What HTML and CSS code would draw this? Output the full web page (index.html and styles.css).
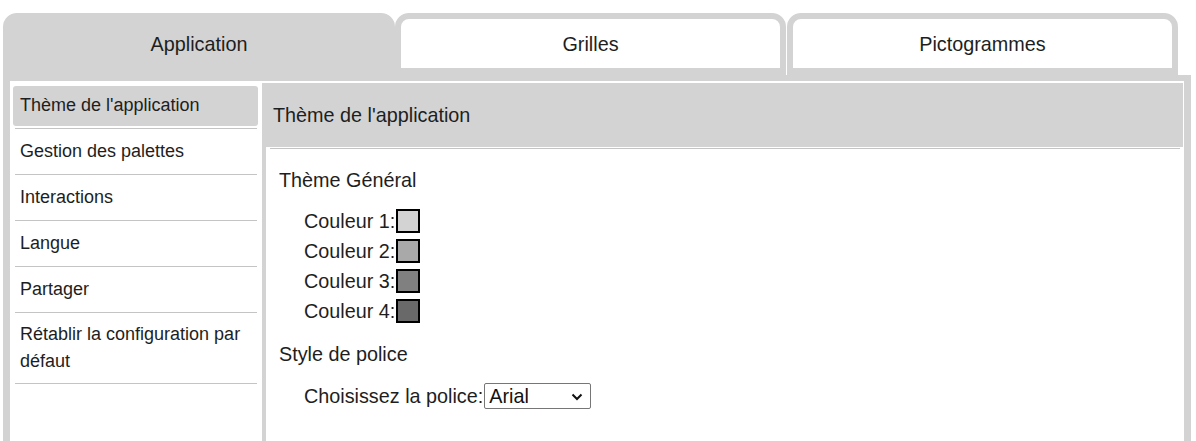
FILE: index.html
```html
<!DOCTYPE html>
<html lang="fr">
<head>
<meta charset="utf-8">
<title>Paramètres</title>
<link rel="stylesheet" href="styles.css">
</head>
<body>
<div class="page">
  <div class="tabs">
    <div class="tab tab-active">Application</div>
    <div class="tab">Grilles</div>
    <div class="tab tab-last">Pictogrammes</div>
  </div>
  <div class="panel">
    <div class="panel-inner">
      <ul class="sidebar">
        <li class="nav-item is-active"><span class="nav-label">Thème de l'application</span></li>
        <li class="nav-item"><span class="nav-label">Gestion des palettes</span></li>
        <li class="nav-item"><span class="nav-label">Interactions</span></li>
        <li class="nav-item"><span class="nav-label">Langue</span></li>
        <li class="nav-item"><span class="nav-label">Partager</span></li>
        <li class="nav-item"><span class="nav-label">Rétablir la configuration par défaut</span></li>
      </ul>
      <div class="content">
        <div class="content-header">Thème de l'application</div>
        <div class="content-body">
          <div class="rule"></div>
          <div class="section">
            <div class="section-title title-first">Thème Général</div>
            <div class="color-list">
              <div class="color-row">Couleur 1:<span class="swatch" style="background:#d3d3d3"></span></div>
              <div class="color-row">Couleur 2:<span class="swatch" style="background:#a9a9a9"></span></div>
              <div class="color-row">Couleur 3:<span class="swatch" style="background:#808080"></span></div>
              <div class="color-row">Couleur 4:<span class="swatch" style="background:#696969"></span></div>
            </div>
            <div class="section-title title-second">Style de police</div>
            <div class="font-row">
              <span>Choisissez la police:</span>
              <span class="select-wrap">
                <select class="font-select">
                  <option>Arial</option>
                  <option>Verdana</option>
                  <option>Times New Roman</option>
                </select>
                <svg class="chevron" width="12" height="8" viewBox="0 0 12 8" aria-hidden="true"><path d="M1.5 1.5 L6 6 L10.5 1.5" fill="none" stroke="#111" stroke-width="2"/></svg>
              </span>
            </div>
          </div>
        </div>
      </div>
    </div>
  </div>
</div>
</body>
</html>
```
FILE: styles.css
```css
* { box-sizing: border-box; }

html, body {
  margin: 0;
  padding: 0;
  background: #fff;
  overflow: hidden;
}

body {
  font-family: "Liberation Sans", Arial, sans-serif;
  color: #1e1e1e;
}

.page {
  padding: 13px 0 0 3px;
  height: 441px;
}

.tabs {
  display: flex;
  height: 62px;
}

.tab {
  display: flex;
  align-items: center;
  justify-content: center;
  width: 391px;
  font-size: 19.8px;
  background: #fff;
  border: 6px solid #d3d3d3;
  border-bottom-width: 7px;
  border-radius: 14px 14px 0 0;
  padding-top: 1px;
}

.tab-active {
  width: 392px;
  background: #d3d3d3;
}

.tab-last {
  margin-left: 1px;
}

.panel {
  width: 1188px;
  height: 366px;
  background: #d3d3d3;
  padding: 6px 7px 0 7px;
}

.panel-inner {
  display: flex;
  height: 100%;
  background: #fff;
  padding: 2px 1px 0 0;
  gap: 3px;
}

.sidebar {
  list-style: none;
  margin: 0;
  padding: 0;
  width: 249px;
  flex: none;
  font-size: 18px;
}

.nav-item {
  margin: 0 2px 0 5px;
  padding: 3px 0 2px;
  border-bottom: 1px solid #c4c4c4;
}

.nav-label {
  display: block;
  padding: 6px 5px 7px;
  line-height: 27px;
}

.nav-item:last-child .nav-label {
  padding: 5px 5px 6px;
}

.is-active .nav-label {
  background: #d3d3d3;
  border-radius: 3px;
  margin: 0 -1px 0 -2px;
  padding-left: 7px;
}

.content {
  flex: 1;
  display: flex;
  flex-direction: column;
  background: #d3d3d3;
  padding-left: 4px;
}

.content-header {
  height: 64px;
  display: flex;
  align-items: center;
  padding: 0 7px;
  font-size: 19.8px;
}

.content-body {
  flex: 1;
  background: #fff;
  padding-top: 1px;
}

.rule {
  margin: 0 3px 0 4px;
  border-top: 1px solid #c4c4c4;
}

.section {
  padding-left: 13px;
}

.section-title {
  font-size: 19.8px;
  line-height: 22px;
}

.title-first { margin-top: 20px; }
.title-second { margin-top: 17px; }

.color-list {
  margin-top: 15px;
  padding-left: 25px;
}

.color-row {
  display: flex;
  align-items: center;
  height: 30px;
  font-size: 19.8px;
}

.swatch {
  display: inline-block;
  flex: none;
  width: 24px;
  height: 24px;
  border: 2px solid #000;
  margin-left: 1px;
}

.font-row {
  display: flex;
  align-items: center;
  height: 30px;
  margin-top: 16px;
  padding-left: 25px;
  font-size: 19.8px;
}

.select-wrap {
  position: relative;
  display: inline-block;
  margin-left: 1px;
}

.font-select {
  appearance: none;
  -webkit-appearance: none;
  width: 107px;
  height: 26px;
  font-family: "Liberation Sans", Arial, sans-serif;
  font-size: 19.8px;
  color: #111;
  background: #fff;
  border: 1px solid #767676;
  border-radius: 2px;
  padding: 0 0 0 4px;
  margin: 0;
  display: block;
  line-height: 24px;
}

.chevron {
  position: absolute;
  right: 8px;
  top: 10px;
  pointer-events: none;
}
```
